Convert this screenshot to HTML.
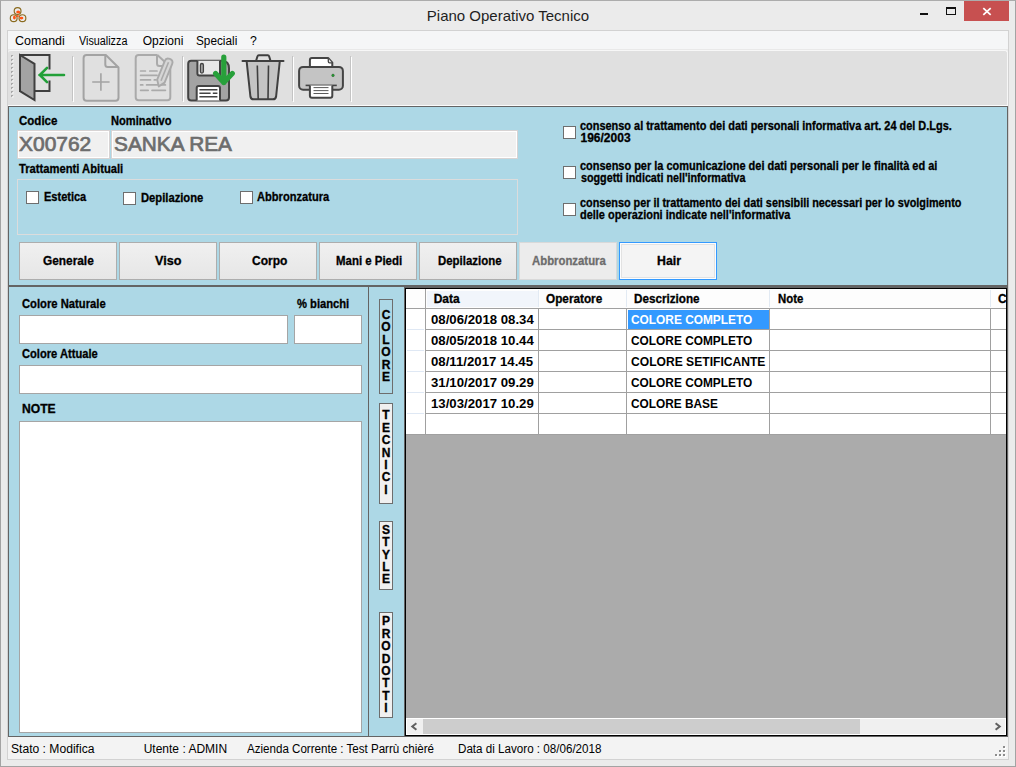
<!DOCTYPE html>
<html><head><meta charset="utf-8">
<style>
html,body{margin:0;padding:0;}
body{width:1016px;height:767px;position:relative;overflow:hidden;background:#ebebeb;font-family:"Liberation Sans",sans-serif;color:#000;}
div,span,svg{position:absolute;box-sizing:border-box;}
.t{white-space:pre;font-size:12px;line-height:12px;transform-origin:0 0;}
.b{font-weight:bold;}
.blue{background:#add8e6;}
.tb{background:#f0f0f0;border:1px solid #d7d3d3;box-shadow:inset 0 0 0 1px #fff;}
.wb{background:#fff;border:1px solid #a5a5a5;}
.cb{width:13px;height:13px;background:#fff;border:1px solid #6e6e6e;}
.btn{height:38px;width:98px;border:1px solid #adadad;background:linear-gradient(#f0f0f0,#e6e6e6);}
.vbtn{width:14px;border:1px solid #6d6d6d;}
.gl{background:#a0a0a0;}
</style></head><body>
<!-- window frame -->
<div style="left:0;top:0;width:1016px;height:767px;border:1px solid #a3a3a3;border-top-color:#acacac;"></div>
<!-- title icon -->
<svg style="left:0;top:0" width="30" height="26" viewBox="0 0 30 26">
 <g fill="none" stroke="#8a6a1e" stroke-width="1.15">
  <circle cx="17.6" cy="11.05" r="3.4"/><circle cx="13.7" cy="18.15" r="3.4"/><circle cx="22.45" cy="18.15" r="3.4"/>
 </g>
 <g fill="#ff5514">
  <ellipse cx="18.2" cy="11.9" rx="2" ry="1.5"/><ellipse cx="14.4" cy="17.4" rx="1.4" ry="2"/><ellipse cx="21.4" cy="18.1" rx="2" ry="1.4"/><circle cx="17.8" cy="16" r="1.1"/>
 </g>
</svg>
<!-- caption buttons -->
<div style="left:920px;top:13px;width:8px;height:2px;background:#111;"></div>
<div style="left:946px;top:7px;width:10px;height:8px;border:1px solid #111;border-top-width:2px;"></div>
<div style="left:964px;top:1px;width:45px;height:20px;background:#c75050;"></div>
<svg style="left:982px;top:7px" width="10" height="9" viewBox="0 0 10 9"><path d="M1.3 1.2 L8.7 7.8 M8.7 1.2 L1.3 7.8" stroke="#fff" stroke-width="1.75"/></svg>

<!-- client border -->
<div style="left:7px;top:30px;width:1002px;height:730px;border:1px solid #d2d2d2;"></div>
<!-- menu -->
<div style="left:8px;top:31px;width:1000px;height:19px;background:#f5f6f7;"></div>
<div style="left:8px;top:49px;width:1000px;height:1px;background:#e9e9e9;"></div>

<!-- toolbar -->
<div style="left:8px;top:50px;width:1000px;height:56px;background:#e0e0e0;border-radius:3px 3px 0 0;border-top:1px solid #f7f7f7;border-right:1px solid #f7f7f7;border-bottom:1px solid #fbfbfb;"></div>
<svg style="left:0;top:0" width="360" height="106" viewBox="0 0 360 106">
 <g fill="#a9a9a9">
  <rect x="11" y="55" width="2" height="2"/><rect x="11" y="59" width="2" height="2"/><rect x="11" y="63" width="2" height="2"/><rect x="11" y="67" width="2" height="2"/><rect x="11" y="71" width="2" height="2"/><rect x="11" y="75" width="2" height="2"/><rect x="11" y="79" width="2" height="2"/><rect x="11" y="83" width="2" height="2"/><rect x="11" y="87" width="2" height="2"/><rect x="11" y="91" width="2" height="2"/><rect x="11" y="95" width="2" height="2"/>
 </g>
 <g fill="#fbfbfb">
  <rect x="12" y="56" width="1.5" height="1.5"/><rect x="12" y="60" width="1.5" height="1.5"/><rect x="12" y="64" width="1.5" height="1.5"/><rect x="12" y="68" width="1.5" height="1.5"/><rect x="12" y="72" width="1.5" height="1.5"/><rect x="12" y="76" width="1.5" height="1.5"/><rect x="12" y="80" width="1.5" height="1.5"/><rect x="12" y="84" width="1.5" height="1.5"/><rect x="12" y="88" width="1.5" height="1.5"/><rect x="12" y="92" width="1.5" height="1.5"/><rect x="12" y="96" width="1.5" height="1.5"/>
 </g>
 <g fill="#a9a9a9">
  <rect x="11" y="55" width="1.5" height="1.5"/><rect x="11" y="59" width="1.5" height="1.5"/><rect x="11" y="63" width="1.5" height="1.5"/><rect x="11" y="67" width="1.5" height="1.5"/><rect x="11" y="71" width="1.5" height="1.5"/><rect x="11" y="75" width="1.5" height="1.5"/><rect x="11" y="79" width="1.5" height="1.5"/><rect x="11" y="83" width="1.5" height="1.5"/><rect x="11" y="87" width="1.5" height="1.5"/><rect x="11" y="91" width="1.5" height="1.5"/><rect x="11" y="95" width="1.5" height="1.5"/>
 </g>
 <!-- exit -->
 <path d="M49.5 69.5 V55 H20 V91 H49.5 V80.5" fill="none" stroke="#3f3f3f" stroke-width="2"/>
 <path d="M20 55 L34.5 63.8 V100 L20 91.2 Z" fill="#a3a3a3" stroke="#3f3f3f" stroke-width="2" stroke-linejoin="miter"/>
 <path d="M39.5 75 H64 M47 67.8 L39.8 75 L47 82.2" fill="none" stroke="#22a038" stroke-width="2.6" stroke-linecap="round"/>
 <!-- separators -->
 <g><rect x="72" y="56" width="1" height="45" fill="#c4c4c4"/><rect x="73" y="57" width="1" height="45" fill="#fff"/>
 <rect x="182" y="56" width="1" height="45" fill="#c4c4c4"/><rect x="183" y="57" width="1" height="45" fill="#fff"/>
 <rect x="292" y="56" width="1" height="45" fill="#c4c4c4"/><rect x="293" y="57" width="1" height="45" fill="#fff"/>
 <rect x="350" y="56" width="1" height="45" fill="#c4c4c4"/><rect x="351" y="57" width="1" height="45" fill="#fff"/></g>
 <!-- new doc -->
 <path d="M105.8 55 H86.6 Q83.6 55 83.6 58 V97.7 Q83.6 100.7 86.6 100.7 H115.5 Q118.5 100.7 118.5 97.7 V67.5 Z" fill="none" stroke="#a3a3a3" stroke-width="2" stroke-linejoin="round"/>
 <path d="M105.3 55 V64.5 Q105.3 67 107.8 67 H118.5" fill="none" stroke="#a3a3a3" stroke-width="2"/>
 <path d="M92.2 82 H109.6 M100.9 73.3 V90.8" fill="none" stroke="#a3a3a3" stroke-width="1.6"/>
 <!-- edit doc -->
 <path d="M157.4 55 H138.7 Q135.7 55 135.7 58 V97.2 Q135.7 100.2 138.7 100.2 H167.3 Q170.3 100.2 170.3 97.2 V67 L157.4 55" fill="none" stroke="#aaaaaa" stroke-width="2" stroke-linejoin="round"/>
 <path d="M157 55 V63.5 Q157 66 159.5 66 H162" fill="none" stroke="#aaaaaa" stroke-width="2"/>
 <g stroke="#aaaaaa" stroke-width="1.7" stroke-linecap="round" fill="none">
  <path d="M140.6 71 H145.4 M149.8 71 H157"/>
  <path d="M140.6 75.4 H157"/>
  <path d="M140.6 79.9 H150.5 M154.3 79.9 H156"/>
  <path d="M140.6 84.9 H142.8 M146.6 84.9 H165.4"/>
  <path d="M140.6 90.3 H148.2 M152 90.3 H165.4"/>
 </g>
 <g transform="translate(164 73.4) rotate(22)">
  <path d="M-4 -12 Q-4 -15.6 0 -15.6 Q4 -15.6 4 -12 V8.3 L0 14 L-4 8.3 Z" fill="#d6d6d6" stroke="#aaaaaa" stroke-width="1.9" stroke-linejoin="round"/>
  <path d="M0 -12 V8" stroke="#aaaaaa" stroke-width="1.6"/>
 </g>
 <!-- save -->
 <path d="M191.2 60.7 H222 Q229 61 229 68.2 V97.6 Q229 100.6 226 100.6 H191.2 Q188.2 100.6 188.2 97.6 V63.7 Q188.2 60.7 191.2 60.7 Z" fill="#a3a3a3" stroke="#434343" stroke-width="2" stroke-linejoin="round"/>
 <path d="M197.4 60.7 V73.6 Q197.4 75.6 199.4 75.6 H220 V60.7" fill="#e8e8e8" stroke="#434343" stroke-width="2"/>
 <rect x="200.4" y="63.5" width="3" height="9.6" rx="1.5" fill="#a3a3a3" stroke="#434343" stroke-width="1.3"/>
 <path d="M196.7 100.6 V88 Q196.7 86 198.7 86 H218 Q220 86 220 88 V100.6" fill="#ffffff" stroke="#434343" stroke-width="2"/>
 <g stroke="#434343" stroke-width="1.4"><path d="M199.4 89.7 H217.4 M199.4 93.2 H210.6 M212.8 93.2 H217.4 M199.4 96.7 H217.4"/></g>
 <path d="M223.8 57.2 V82.5 M215.6 73.4 L223.8 82.6 L232.3 73.4" fill="none" stroke="#27a03a" stroke-width="5.2" stroke-linecap="round" stroke-linejoin="round"/>
 <!-- trash -->
 <path d="M256 61 L257.5 56.3 Q257.8 55.3 258.8 55.3 H267.8 Q268.8 55.3 269.1 56.3 L270.6 61" fill="none" stroke="#3f3f3f" stroke-width="2" stroke-linejoin="round"/>
 <path d="M246.6 61 L250.4 96.5 Q250.8 99.3 253.6 99.3 H272.9 Q275.7 99.3 276.1 96.5 L279.8 61 Z" fill="#c4c4c4" stroke="#3f3f3f" stroke-width="2" stroke-linejoin="round"/>
 <path d="M242.5 61 H283.5" stroke="#3f3f3f" stroke-width="2" stroke-linecap="round"/>
 <path d="M257.3 65.5 L258.2 99 M268.5 65.5 L268 99" stroke="#3f3f3f" stroke-width="1.6"/>
 <!-- printer -->
 <path d="M309.9 67 V60.1 Q309.9 58.1 311.9 58.1 H328.3 L332.3 62.6 V67" fill="#ffffff" stroke="#444" stroke-width="2" stroke-linejoin="round"/>
 <path d="M328.3 58.5 V61.5 Q328.3 62.8 329.6 62.8 H332" fill="#e6e6e6" stroke="#444" stroke-width="1.3"/>
 <rect x="299.1" y="66.9" width="43.8" height="22.8" rx="4" fill="#c4c4c4" stroke="#444" stroke-width="2"/>
 <path d="M305.6 85.4 H336.8" stroke="#444" stroke-width="1.6"/>
 <path d="M309.9 85.4 V95.8 Q309.9 97.8 311.9 97.8 H330.3 Q332.3 97.8 332.3 95.8 V85.4" fill="#ffffff" stroke="#444" stroke-width="2"/>
 <path d="M313.5 87.6 H328.5 M313.5 90.6 H328.5 M313.5 93.5 H328.5" stroke="#5a5a5a" stroke-width="1"/>
 <circle cx="333" cy="75.4" r="1.3" fill="#1fa02e" stroke="#3a5a3a" stroke-width="0.5"/>
</svg>


<!-- top blue panel -->
<div class="blue" style="left:8px;top:106px;width:1000px;height:180px;border:1px solid #646464;"></div>
<div class="tb" style="left:17px;top:130px;width:93px;height:29px;"></div>
<div class="tb" style="left:111px;top:130px;width:407px;height:29px;"></div>
<div style="left:17px;top:179px;width:501px;height:56px;border:1px solid #dcdcdc;"></div>
<div class="cb" style="left:26px;top:191px;"></div>
<div class="cb" style="left:123px;top:192px;"></div>
<div class="cb" style="left:240px;top:191px;"></div>

<div class="cb" style="left:563px;top:126px;"></div>
<div class="cb" style="left:563px;top:166px;"></div>
<div class="cb" style="left:563px;top:203px;"></div>

<!-- buttons -->
<div class="btn" style="left:19px;top:242px;"></div>
<div class="btn" style="left:119px;top:242px;"></div>
<div class="btn" style="left:219px;top:242px;"></div>
<div class="btn" style="left:319px;top:242px;"></div>
<div class="btn" style="left:419px;top:242px;"></div>
<div class="btn" style="left:519px;top:242px;border-color:#d9d9d9;background:#ececec;"></div>
<div class="btn" style="left:619px;top:242px;border-color:#3399ff;background:#f4f4f4;box-shadow:inset 0 0 0 1px #fdfdfd,inset 0 0 0 2px #e2e2e2;"></div>

<!-- bottom area -->
<div class="blue" style="left:8px;top:286px;width:1000px;height:451px;border:1px solid #646464;"></div>
<div style="left:8px;top:286px;width:361px;height:451px;border:1px solid #646464;"></div>
<div class="wb" style="left:19px;top:315px;width:269px;height:29px;"></div>
<div class="wb" style="left:294px;top:315px;width:68px;height:29px;"></div>
<div class="wb" style="left:19px;top:365px;width:343px;height:29px;"></div>
<div class="wb" style="left:19px;top:421px;width:343px;height:312px;"></div>

<!-- vertical tab buttons -->
<div class="vbtn blue" style="left:379px;top:299px;height:95px;"></div>
<div class="vbtn" style="left:379px;top:403px;height:101px;background:#f0f0f0;"></div>
<div class="vbtn" style="left:379px;top:521px;height:69px;background:#f0f0f0;"></div>
<div class="vbtn" style="left:379px;top:612px;height:106px;background:#f0f0f0;"></div>
<div id="vtext"></div>

<!-- grid -->
<div style="left:404px;top:287px;width:604px;height:450px;background:#ababab;border:2px solid #000;"></div>
<div style="left:406px;top:289px;width:600px;height:19px;background:#fdfdfd;"></div>
<div style="left:427px;top:291px;width:111px;height:16px;background:#f1f5fb;"></div>
<div style="left:538px;top:290px;width:1px;height:17px;background:#e2eaf3;"></div>
<div style="left:626px;top:290px;width:1px;height:17px;background:#e2eaf3;"></div>
<div style="left:769px;top:290px;width:1px;height:17px;background:#e2eaf3;"></div>
<div style="left:990px;top:290px;width:1px;height:17px;background:#e2eaf3;"></div>
<div class="gl" style="left:406px;top:308px;width:600px;height:1px;"></div>
<div style="left:406px;top:309px;width:600px;height:126px;background:#fff;"></div>
<div class="gl" style="left:425px;top:289px;width:1px;height:146px;"></div>
<div class="gl" style="left:538px;top:309px;width:1px;height:126px;"></div>
<div class="gl" style="left:626px;top:309px;width:1px;height:126px;"></div>
<div class="gl" style="left:769px;top:309px;width:1px;height:126px;"></div>
<div class="gl" style="left:990px;top:309px;width:1px;height:126px;"></div>
<div class="gl" style="left:426px;top:329px;width:580px;height:1px;"></div>
<div style="left:407px;top:329px;width:17px;height:1px;background:#dfe8f4;"></div>
<div class="gl" style="left:426px;top:350px;width:580px;height:1px;"></div>
<div style="left:407px;top:350px;width:17px;height:1px;background:#dfe8f4;"></div>
<div class="gl" style="left:426px;top:371px;width:580px;height:1px;"></div>
<div style="left:407px;top:371px;width:17px;height:1px;background:#dfe8f4;"></div>
<div class="gl" style="left:426px;top:392px;width:580px;height:1px;"></div>
<div style="left:407px;top:392px;width:17px;height:1px;background:#dfe8f4;"></div>
<div class="gl" style="left:426px;top:413px;width:580px;height:1px;"></div>
<div style="left:407px;top:413px;width:17px;height:1px;background:#dfe8f4;"></div>
<div class="gl" style="left:426px;top:434px;width:580px;height:1px;"></div>
<div class="gl" style="left:406px;top:434px;width:20px;height:1px;"></div>
<div style="left:628px;top:310px;width:141px;height:19px;background:#3399ff;"></div>
<div style="left:406px;top:718px;width:600px;height:17px;background:#fff;"></div>
<div style="left:407px;top:719px;width:598px;height:15px;background:#f0f0f0;"></div>
<div style="left:423px;top:719px;width:437px;height:15px;background:#cdcdcd;"></div>
<svg style="left:410px;top:722px" width="8" height="9" viewBox="0 0 8 9"><path d="M6.4 1.3 L2.3 4.5 L6.4 7.7" fill="none" stroke="#606060" stroke-width="2"/></svg>
<svg style="left:994px;top:722px" width="8" height="9" viewBox="0 0 8 9"><path d="M1.6 1.3 L5.7 4.5 L1.6 7.7" fill="none" stroke="#606060" stroke-width="2"/></svg>
<div style="left:404px;top:287px;width:604px;height:450px;border:1px solid #646464;"></div>
<div style="left:405px;top:288px;width:602px;height:448px;border:1px solid #000;"></div>

<!-- status bar -->
<div style="left:8px;top:737px;width:1000px;height:22px;background:#f3f3f3;"></div>
<svg style="left:990px;top:740px" width="20" height="20" viewBox="990 740 20 20"><g fill="#fff"><rect x="1004" y="747" width="2" height="2"/><rect x="1000" y="751" width="2" height="2"/><rect x="1004" y="751" width="2" height="2"/><rect x="996" y="755" width="2" height="2"/><rect x="1000" y="755" width="2" height="2"/><rect x="1004" y="755" width="2" height="2"/></g><g fill="#8c8c8c"><rect x="1003" y="746" width="2" height="2"/><rect x="999" y="750" width="2" height="2"/><rect x="1003" y="750" width="2" height="2"/><rect x="995" y="754" width="2" height="2"/><rect x="999" y="754" width="2" height="2"/><rect x="1003" y="754" width="2" height="2"/></g></svg>
<div class="t" style="left:426.80px;top:8px;font-size:15px;line-height:15px;color:#1f1f1f;">Piano Operativo Tecnico</div>
<div class="t" style="left:14.76px;top:35px;font-size:12px;line-height:12px;transform:scaleX(1.0370);">Comandi</div>
<div class="t" style="left:78.50px;top:35px;font-size:12px;line-height:12px;transform:scaleX(0.9000);">Visualizza</div>
<div class="t" style="left:142.70px;top:35px;font-size:12px;line-height:12px;">Opzioni</div>
<div class="t" style="left:196.42px;top:35px;font-size:12px;line-height:12px;transform:scaleX(0.9825);">Speciali</div>
<div class="t" style="left:249.78px;top:35px;font-size:12px;line-height:12px;transform:scaleX(1.0200);">?</div>
<div class="t" style="left:19.20px;top:115px;font-size:12px;line-height:12px;font-weight:bold;-webkit-text-stroke-width:0.3px;transform:scaleX(0.9600);">Codice</div>
<div class="t" style="left:110.60px;top:115px;font-size:12px;line-height:12px;font-weight:bold;-webkit-text-stroke-width:0.3px;transform:scaleX(0.9246);">Nominativo</div>
<div class="t" style="left:18.75px;top:134px;font-size:20px;line-height:20px;color:#6d6d6d;transform:scaleX(1.0478);-webkit-text-stroke:0.7px #6d6d6d;">X00762</div>
<div class="t" style="left:113.96px;top:134px;font-size:20px;line-height:20px;color:#6d6d6d;transform:scaleX(1.0402);-webkit-text-stroke:0.7px #6d6d6d;">SANKA REA</div>
<div class="t" style="left:19.40px;top:163px;font-size:12px;line-height:12px;font-weight:bold;-webkit-text-stroke-width:0.3px;transform:scaleX(0.9342);">Trattamenti Abituali</div>
<div class="t" style="left:44.00px;top:191px;font-size:12px;line-height:12px;font-weight:bold;-webkit-text-stroke-width:0.3px;transform:scaleX(0.9174);">Estetica</div>
<div class="t" style="left:141.00px;top:192px;font-size:12px;line-height:12px;font-weight:bold;-webkit-text-stroke-width:0.3px;transform:scaleX(0.9343);">Depilazione</div>
<div class="t" style="left:257.10px;top:191px;font-size:12px;line-height:12px;font-weight:bold;-webkit-text-stroke-width:0.3px;transform:scaleX(0.9256);">Abbronzatura</div>
<div class="t" style="left:580.30px;top:120px;font-size:12px;line-height:12px;font-weight:bold;-webkit-text-stroke-width:0.3px;transform:scaleX(0.9110);">consenso al trattamento dei dati personali informativa art. 24 del D.Lgs.</div>
<div class="t" style="left:580.50px;top:132px;font-size:12px;line-height:12px;font-weight:bold;-webkit-text-stroke-width:0.3px;">196/2003</div>
<div class="t" style="left:580.40px;top:160px;font-size:12px;line-height:12px;font-weight:bold;-webkit-text-stroke-width:0.3px;transform:scaleX(0.9128);">consenso per la comunicazione dei dati personali per le finalità ed ai</div>
<div class="t" style="left:580.50px;top:172px;font-size:12px;line-height:12px;font-weight:bold;-webkit-text-stroke-width:0.3px;transform:scaleX(0.8957);">soggetti indicati nell'informativa</div>
<div class="t" style="left:580.40px;top:197px;font-size:12px;line-height:12px;font-weight:bold;-webkit-text-stroke-width:0.3px;transform:scaleX(0.9021);">consenso per il trattamento dei dati sensibili necessari per lo svolgimento</div>
<div class="t" style="left:580.40px;top:209px;font-size:12px;line-height:12px;font-weight:bold;-webkit-text-stroke-width:0.3px;transform:scaleX(0.9113);">delle operazioni indicate nell'informativa</div>
<div class="t" style="left:43.40px;top:255px;font-size:12px;line-height:12px;font-weight:bold;-webkit-text-stroke-width:0.3px;transform:scaleX(0.9882);">Generale</div>
<div class="t" style="left:155.00px;top:255px;font-size:12px;line-height:12px;font-weight:bold;-webkit-text-stroke-width:0.3px;transform:scaleX(1.0480);">Viso</div>
<div class="t" style="left:252.00px;top:255px;font-size:12px;line-height:12px;font-weight:bold;-webkit-text-stroke-width:0.3px;">Corpo</div>
<div class="t" style="left:335.50px;top:255px;font-size:12px;line-height:12px;font-weight:bold;-webkit-text-stroke-width:0.3px;transform:scaleX(0.9536);">Mani e Piedi</div>
<div class="t" style="left:437.90px;top:255px;font-size:12px;line-height:12px;font-weight:bold;-webkit-text-stroke-width:0.3px;transform:scaleX(0.9522);">Depilazione</div>
<div class="t" style="left:531.90px;top:255px;font-size:12px;line-height:12px;font-weight:bold;-webkit-text-stroke-width:0.3px;color:#6d6d6d;transform:scaleX(0.9462);">Abbronzatura</div>
<div class="t" style="left:657.30px;top:255px;font-size:12px;line-height:12px;font-weight:bold;-webkit-text-stroke-width:0.3px;transform:scaleX(1.0250);">Hair</div>
<div class="t" style="left:21.50px;top:298px;font-size:12px;line-height:12px;font-weight:bold;-webkit-text-stroke-width:0.3px;transform:scaleX(0.9360);">Colore Naturale</div>
<div class="t" style="left:296.90px;top:298px;font-size:12px;line-height:12px;font-weight:bold;-webkit-text-stroke-width:0.3px;transform:scaleX(0.9321);">% bianchi</div>
<div class="t" style="left:21.50px;top:348px;font-size:12px;line-height:12px;font-weight:bold;-webkit-text-stroke-width:0.3px;transform:scaleX(0.9280);">Colore Attuale</div>
<div class="t" style="left:21.70px;top:403px;font-size:12px;line-height:12px;font-weight:bold;-webkit-text-stroke-width:0.3px;transform:scaleX(1.0091);">NOTE</div>
<div class="t" style="left:433.70px;top:293px;font-size:12px;line-height:12px;font-weight:bold;-webkit-text-stroke-width:0.3px;">Data</div>
<div class="t" style="left:545.70px;top:293px;font-size:12px;line-height:12px;font-weight:bold;-webkit-text-stroke-width:0.3px;transform:scaleX(0.9807);">Operatore</div>
<div class="t" style="left:634.40px;top:293px;font-size:12px;line-height:12px;font-weight:bold;-webkit-text-stroke-width:0.3px;transform:scaleX(0.9731);">Descrizione</div>
<div class="t" style="left:778.00px;top:293px;font-size:12px;line-height:12px;font-weight:bold;-webkit-text-stroke-width:0.3px;transform:scaleX(0.9481);">Note</div>
<div style="left:990px;top:289px;width:16px;height:19px;overflow:hidden;"><div class="t" style="left:8.00px;top:4px;font-size:12px;line-height:12px;font-weight:bold;-webkit-text-stroke-width:0.3px;">C</div></div>
<div class="t" style="left:430.70px;top:314px;font-size:12px;line-height:12px;font-weight:bold;transform:scaleX(1.1000);">08/06/2018 08.34</div>
<div class="t" style="left:630.90px;top:314px;font-size:12px;line-height:12px;font-weight:bold;color:#fff;transform:scaleX(0.9902);">COLORE COMPLETO</div>
<div class="t" style="left:430.70px;top:335px;font-size:12px;line-height:12px;font-weight:bold;transform:scaleX(1.1000);">08/05/2018 10.44</div>
<div class="t" style="left:630.90px;top:335px;font-size:12px;line-height:12px;font-weight:bold;transform:scaleX(0.9902);">COLORE COMPLETO</div>
<div class="t" style="left:430.70px;top:356px;font-size:12px;line-height:12px;font-weight:bold;transform:scaleX(1.1000);">08/11/2017 14.45</div>
<div class="t" style="left:630.90px;top:356px;font-size:12px;line-height:12px;font-weight:bold;transform:scaleX(1.0083);">COLORE SETIFICANTE</div>
<div class="t" style="left:430.70px;top:377px;font-size:12px;line-height:12px;font-weight:bold;transform:scaleX(1.1000);">31/10/2017 09.29</div>
<div class="t" style="left:630.90px;top:377px;font-size:12px;line-height:12px;font-weight:bold;transform:scaleX(0.9902);">COLORE COMPLETO</div>
<div class="t" style="left:430.70px;top:398px;font-size:12px;line-height:12px;font-weight:bold;transform:scaleX(1.1000);">13/03/2017 10.29</div>
<div class="t" style="left:630.90px;top:398px;font-size:12px;line-height:12px;font-weight:bold;transform:scaleX(0.9870);">COLORE BASE</div>
<div class="t" style="left:10.79px;top:743px;font-size:12px;line-height:12px;transform:scaleX(1.0085);">Stato : Modifica</div>
<div class="t" style="left:143.70px;top:743px;font-size:12px;line-height:12px;">Utente : ADMIN</div>
<div class="t" style="left:246.80px;top:743px;font-size:12px;line-height:12px;transform:scaleX(0.9644);">Azienda Corrente : Test Parrù chièré</div>
<div class="t" style="left:458.43px;top:743px;font-size:12px;line-height:12px;transform:scaleX(0.9687);">Data di Lavoro : 08/06/2018</div>
<div class="t b" style="left:379px;top:309px;width:14px;text-align:center;-webkit-text-stroke-width:0.3px;">C</div>
<div class="t b" style="left:379px;top:321px;width:14px;text-align:center;-webkit-text-stroke-width:0.3px;">O</div>
<div class="t b" style="left:379px;top:334px;width:14px;text-align:center;-webkit-text-stroke-width:0.3px;">L</div>
<div class="t b" style="left:379px;top:346px;width:14px;text-align:center;-webkit-text-stroke-width:0.3px;">O</div>
<div class="t b" style="left:379px;top:359px;width:14px;text-align:center;-webkit-text-stroke-width:0.3px;">R</div>
<div class="t b" style="left:379px;top:371px;width:14px;text-align:center;-webkit-text-stroke-width:0.3px;">E</div>
<div class="t b" style="left:379px;top:409px;width:14px;text-align:center;-webkit-text-stroke-width:0.3px;">T</div>
<div class="t b" style="left:379px;top:422px;width:14px;text-align:center;-webkit-text-stroke-width:0.3px;">E</div>
<div class="t b" style="left:379px;top:434px;width:14px;text-align:center;-webkit-text-stroke-width:0.3px;">C</div>
<div class="t b" style="left:379px;top:447px;width:14px;text-align:center;-webkit-text-stroke-width:0.3px;">N</div>
<div class="t b" style="left:379px;top:459px;width:14px;text-align:center;-webkit-text-stroke-width:0.3px;">I</div>
<div class="t b" style="left:379px;top:471px;width:14px;text-align:center;-webkit-text-stroke-width:0.3px;">C</div>
<div class="t b" style="left:379px;top:484px;width:14px;text-align:center;-webkit-text-stroke-width:0.3px;">I</div>
<div class="t b" style="left:379px;top:524px;width:14px;text-align:center;-webkit-text-stroke-width:0.3px;">S</div>
<div class="t b" style="left:379px;top:536px;width:14px;text-align:center;-webkit-text-stroke-width:0.3px;">T</div>
<div class="t b" style="left:379px;top:549px;width:14px;text-align:center;-webkit-text-stroke-width:0.3px;">Y</div>
<div class="t b" style="left:379px;top:561px;width:14px;text-align:center;-webkit-text-stroke-width:0.3px;">L</div>
<div class="t b" style="left:379px;top:573px;width:14px;text-align:center;-webkit-text-stroke-width:0.3px;">E</div>
<div class="t b" style="left:379px;top:615px;width:14px;text-align:center;-webkit-text-stroke-width:0.3px;">P</div>
<div class="t b" style="left:379px;top:628px;width:14px;text-align:center;-webkit-text-stroke-width:0.3px;">R</div>
<div class="t b" style="left:379px;top:640px;width:14px;text-align:center;-webkit-text-stroke-width:0.3px;">O</div>
<div class="t b" style="left:379px;top:653px;width:14px;text-align:center;-webkit-text-stroke-width:0.3px;">D</div>
<div class="t b" style="left:379px;top:665px;width:14px;text-align:center;-webkit-text-stroke-width:0.3px;">O</div>
<div class="t b" style="left:379px;top:677px;width:14px;text-align:center;-webkit-text-stroke-width:0.3px;">T</div>
<div class="t b" style="left:379px;top:690px;width:14px;text-align:center;-webkit-text-stroke-width:0.3px;">T</div>
<div class="t b" style="left:379px;top:702px;width:14px;text-align:center;-webkit-text-stroke-width:0.3px;">I</div>
</body></html>
